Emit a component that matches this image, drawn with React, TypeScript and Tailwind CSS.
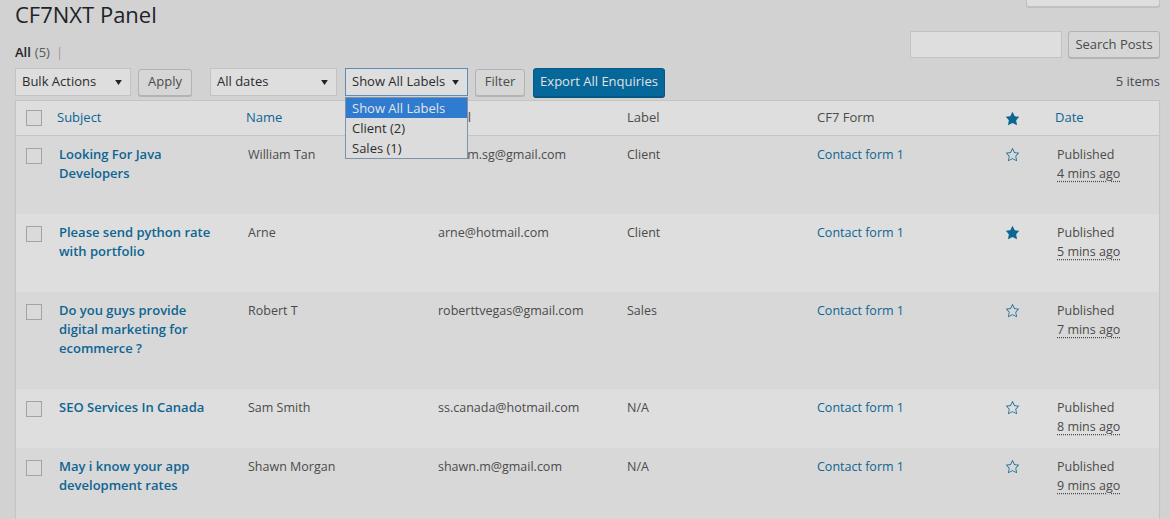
import React from "react";

const rows = [
  {
    title: ["Looking For Java", "Developers"],
    name: "William Tan",
    email: "william.sg@gmail.com",
    label: "Client",
    starred: false,
    ago: "4 mins ago",
  },
  {
    title: ["Please send python rate", "with portfolio"],
    name: "Arne",
    email: "arne@hotmail.com",
    label: "Client",
    starred: true,
    ago: "5 mins ago",
  },
  {
    title: ["Do you guys provide", "digital marketing for", "ecommerce ?"],
    name: "Robert T",
    email: "roberttvegas@gmail.com",
    label: "Sales",
    starred: false,
    ago: "7 mins ago",
  },
  {
    title: ["SEO Services In Canada"],
    name: "Sam Smith",
    email: "ss.canada@hotmail.com",
    label: "N/A",
    starred: false,
    ago: "8 mins ago",
  },
  {
    title: ["May i know your app", "development rates"],
    name: "Shawn Morgan",
    email: "shawn.m@gmail.com",
    label: "N/A",
    starred: false,
    ago: "9 mins ago",
  },
];

const cols =
  "grid grid-cols-[33px_189px_190px_189px_190px_189px_51px_114px]";

function Star({ filled }: { filled: boolean }) {
  return (
    <svg viewBox="0 0 20 20" className="h-[15px] w-[15px] fill-[#0d6592]">
      {filled ? (
        <path d="M10 1l3 6 6 .75-4.12 4.62L16 19l-6-3-6 3 1.13-6.63L1 7.75 7 7z" />
      ) : (
        <path d="M10 1L7 7l-6 .75 4.13 4.62L4 19l6-3 6 3-1.12-6.63L19 7.75 13 7zm0 2.24l2.34 4.69 4.65.58-3.18 3.56.87 5.15L10 14.88l-4.68 2.34.87-5.15-3.18-3.56 4.65-.58z" />
      )}
    </svg>
  );
}

function Caret() {
  return (
    <svg viewBox="0 0 8 6" className="h-[5px] w-[7px] shrink-0 fill-[#1f2327]">
      <path d="M0 0h8L4 6z" />
    </svg>
  );
}

function Select({ text, w, focused }: { text: string; w: string; focused?: boolean }) {
  return (
    <div
      className={`${w} flex h-[28px] items-center justify-between whitespace-nowrap border bg-[#dedede] pl-[6px] pr-[8px] text-[13px] text-[#2c2c2c] ${
        focused ? "border-[#5b8cba]" : "border-[#c2c2c2]"
      }`}
    >
      <span>{text}</span>
      <Caret />
    </div>
  );
}

function Button({ children, w }: { children: React.ReactNode; w: string }) {
  return (
    <button
      className={`${w} h-[27px] whitespace-nowrap rounded-[3px] border border-[#b2b2b2] bg-[#d6d6d6] text-[13px] text-[#4b4b4b] shadow-[0_1px_0_#b5b5b5]`}
    >
      {children}
    </button>
  );
}

function Checkbox() {
  return <div className="h-[16px] w-[16px] border border-[#a3a3a3] bg-[#dadada]" />;
}

export default function App() {
  return (
    <div className="min-h-[519px] w-full overflow-hidden bg-[#d2d2d2] pl-[15px] pr-[10px] font-['Segoe_UI','Open_Sans',sans-serif] text-[12.5px] text-[#4b4b4b]">
      {/* title + screen options */}
      <div className="flex h-[31px] items-start justify-between">
        <h1 className="pt-[1px] text-[22px] leading-[26px] text-[#1f2327]">CF7NXT Panel</h1>
        <div className="-mt-[22px] flex h-[29px] w-[134px] items-center justify-center rounded-b-[3px] border border-t-0 border-[#c2c2c2] bg-[#dedede] text-[13px] text-[#4b4b4b] shadow-[0_1px_1px_#bdbdbd]">
          Screen Options
        </div>
      </div>

      {/* views + search */}
      <div className="flex h-[28px] items-start justify-between">
        <div className="mt-[12px] flex items-center gap-[4px] text-[13px] leading-[19px]">
          <span className="font-semibold text-[#1f2327]">All</span>
          <span className="text-[#5a5a5a]">(5)</span>
          <span className="ml-[2px] text-[#9a9a9a]">|</span>
        </div>
        <div className="flex gap-[6px]">
          <div className="h-[27px] w-[152px] border border-[#c2c2c2] bg-[#dedede]" />
          <Button w="w-[92px]">Search Posts</Button>
        </div>
      </div>

      {/* toolbar */}
      <div className="mt-[8px] flex h-[30px] items-center">
        <Select text="Bulk Actions" w="w-[116px]" />
        <div className="ml-[7px]">
          <Button w="w-[54px]">Apply</Button>
        </div>
        <div className="ml-[18px]">
          <Select text="All dates" w="w-[127px]" />
        </div>
        <div className="relative ml-[8px]">
          <Select text="Show All Labels" w="w-[123px]" focused />
          <div className="absolute left-0 top-[29px] z-10 w-[123px] whitespace-nowrap border border-[#7f93a8] bg-[#dcdcdc] text-[13px] leading-[20px] text-[#2c2c2c]">
            <div className="bg-[#2f7bd0] pl-[6px] text-[#e4e4e4]">Show All Labels</div>
            <div className="pl-[6px]">Client (2)</div>
            <div className="pl-[6px]">Sales (1)</div>
          </div>
        </div>
        <div className="ml-[7px]">
          <Button w="w-[50px]">Filter</Button>
        </div>
        <button className="ml-[8px] h-[29px] w-[132px] whitespace-nowrap rounded-[3px] border border-[#045a84] bg-[#06679a] text-[13px] text-[#e2e2e2] shadow-[0_1px_0_#05527a]">
          Export All Enquiries
        </button>
        <span className="ml-auto text-[13px]">5 items</span>
      </div>

      {/* table */}
      <div className="mt-[3px] border border-[#c4c4c4] shadow-[0_1px_1px_#c8c8c8]">
        <div className={`${cols} h-[35px] items-center border-b border-[#c4c4c4] bg-[#dedede] text-[13px]`}>
          <div className="pl-[10px]">
            <Checkbox />
          </div>
          <div className="pl-[8px] text-[#0d6592]">Subject</div>
          <div className="pl-[8px] text-[#0d6592]">Name</div>
          <div className="pl-[10px] text-[#4b4b4b]">Email</div>
          <div className="pl-[10px] text-[#4b4b4b]">Label</div>
          <div className="pl-[10px] text-[#4b4b4b]">CF7 Form</div>
          <div className="flex pl-[9px]">
            <Star filled />
          </div>
          <div className="pl-[8px] text-[#0d6592]">Date</div>
        </div>

        {rows.map((r, i) => (
          <div
            key={i}
            className={`${cols} leading-[19px] ${i % 2 === 0 ? "bg-[#d8d8d8]" : "bg-[#dedede]"}`}
          >
            <div className="pl-[10px] pt-[12px]">
              <Checkbox />
            </div>
            <div className="px-[10px] pb-[10px] pt-[9px]">
              {r.title.map((line, j) => (
                <div key={j} className="whitespace-nowrap text-[13px] font-semibold text-[#0d6592]">
                  {line}
                </div>
              ))}
              <div className="h-[21px]" />
            </div>
            <div className="px-[10px] pt-[9px]">{r.name}</div>
            <div className="px-[10px] pt-[9px]">{r.email}</div>
            <div className="px-[10px] pt-[9px]">{r.label}</div>
            <div className="px-[10px] pt-[9px] text-[#0d6592]">Contact form 1</div>
            <div className="flex pl-[9px] pt-[11px]">
              <div>
                <Star filled={r.starred} />
              </div>
            </div>
            <div className="px-[10px] pt-[9px]">
              <div>Published</div>
              <div className="underline decoration-dotted underline-offset-[3px]">{r.ago}</div>
            </div>
          </div>
        ))}
      </div>
    </div>
  );
}
